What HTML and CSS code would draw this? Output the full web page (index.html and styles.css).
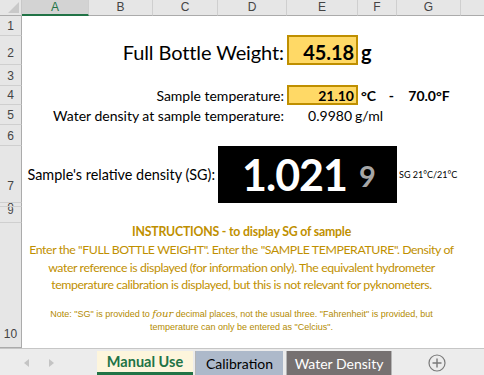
FILE: index.html
```html
<!DOCTYPE html>
<html lang="en">
<head>
    <meta charset="UTF-8">
    <title>Pycnometer SG</title>
    <link rel="stylesheet" href="styles.css">
</head>
<body>
    <div class="window">
        <div class="sheet">
            <div class="corner"><span class="tri"></span></div>
            <div class="colhead sel">A</div>
            <div class="colhead">B</div>
            <div class="colhead">C</div>
            <div class="colhead">D</div>
            <div class="colhead">E</div>
            <div class="colhead">F</div>
            <div class="colhead">G</div>
            <div class="colhead last"></div>

            <div class="rowhead r1">1</div>
            <div class="rowhead r2">2</div>
            <div class="rowhead r3">3</div>
            <div class="rowhead r4">4</div>
            <div class="rowhead r5">5</div>
            <div class="rowhead r6">6</div>
            <div class="rowhead r7">7</div>
            <div class="rowhead r8">8</div>
            <div class="rowhead r9">9</div>
            <div class="rowhead r10">10</div>

            <div class="label big weight-label">Full Bottle Weight:</div>
            <div class="input big weight-input">45.18</div>
            <div class="unit big weight-unit">g</div>

            <div class="label temp-label">Sample temperature:</div>
            <div class="input temp-input">21.10</div>
            <div class="temp-unit"><span>°C</span><span>-</span></div>
            <div class="temp-f">70.0°F</div>

            <div class="label dens-label">Water density at sample temperature:</div>
            <div class="dens-value">0.9980</div>
            <div class="dens-unit">g/ml</div>

            <div class="label sg-label">Sample's relative density (SG):</div>
            <div class="sg-box"><span class="sg-main">1.021</span><span class="sg-last">9</span></div>
            <div class="sg-note">SG 21°C/21°C</div>

            <div class="instructions">
                <div class="ins-title">INSTRUCTIONS - to display SG of sample</div>
                <p class="ins-text">Enter the "FULL BOTTLE WEIGHT". Enter the "SAMPLE TEMPERATURE". Density of<br>water reference is displayed (for information only). The equivalent hydrometer<br>temperature calibration is displayed, but this is not relevant for pyknometers.</p>
                <p class="ins-note">Note: "SG" is provided to <em>four</em> decimal places, not the usual three. "Fahrenheit" is provided, but<br>temperature can only be entered as "Celcius".</p>
            </div>
        </div>

        <div class="tabbar">
            <div class="nav"><span class="arrow left"></span><span class="arrow right"></span></div>
            <div class="tab active">Manual Use</div>
            <div class="tab calib">Calibration</div>
            <div class="tab water">Water Density</div>
            <div class="add">
                <svg width="18" height="18" viewBox="0 0 18 18">
                    <circle cx="9" cy="9" r="8" fill="none" stroke="#7a7a7a" stroke-width="1.2"/>
                    <path d="M9 4.5v9M4.5 9h9" stroke="#7a7a7a" stroke-width="1.4"/>
                </svg>
            </div>
        </div>
    </div>
</body>
</html>
```

FILE: styles.css
```css
body {
    margin: 0;
    background: #ffffff;
    font-family: Lato, "Open Sans", sans-serif;
}
.window {
    width: 484px;
    height: 375px;
    overflow: hidden;
}
.sheet {
    display: grid;
    grid-template-columns: 22px 67px 64px 65px 69px 71px 39px 64px 23px;
    grid-template-rows: 16px 20px 29px 21px 19px 20px 21px 57px 4px 16px 125px;
    height: 348px;
    color: #000;
}
.corner {
    grid-column: 1;
    grid-row: 1;
    background: #e6e6e6;
    border-right: 1px solid #c8c8c8;
    border-bottom: 1px solid #ababab;
    position: relative;
}
.tri {
    position: absolute;
    right: 2px;
    bottom: 2px;
    width: 0;
    height: 0;
    border-left: 11px solid transparent;
    border-bottom: 11px solid #c9c9c9;
}
.colhead {
    grid-row: 1;
    background: #e6e6e6;
    border-right: 1px solid #cfcfcf;
    border-bottom: 1px solid #ababab;
    font-family: "Liberation Sans", Arial, sans-serif;
    font-size: 12px;
    color: #444;
    text-align: center;
    line-height: 15px;
}
.colhead.sel {
    background: #d3d3d3;
    border-bottom: 2px solid #217346;
    color: #217346;
}
.colhead.last {
    border-right: none;
}
.rowhead {
    grid-column: 1;
    background: #e6e6e6;
    border-right: 1px solid #ababab;
    border-bottom: 1px solid #cfcfcf;
    font-family: "Liberation Sans", Arial, sans-serif;
    font-size: 12px;
    color: #444;
    display: flex;
    align-items: flex-end;
    justify-content: center;
    padding-bottom: 2px;
    box-sizing: border-box;
    overflow: hidden;
    line-height: 13px;
}
.r1 { grid-row: 2; }
.r2 { grid-row: 3; padding-bottom: 4px; }
.r3 { grid-row: 4; }
.r4 { grid-row: 5; }
.r5 { grid-row: 6; }
.r6 { grid-row: 7; }
.r7 { grid-row: 8; padding-bottom: 9px; }
.r8 { grid-row: 9; padding-bottom: 0; align-items: center; font-size: 11px; }
.r9 { grid-row: 10; padding-bottom: 0; align-items: flex-start; line-height: 7px; font-size: 11px; }
.r10 { grid-row: 11; border-bottom: 1px solid #ababab; padding-bottom: 6px; }

.label {
    text-align: right;
    padding-right: 3px;
    white-space: nowrap;
    display: flex;
    align-items: center;
    justify-content: flex-end;
    font-size: 14px;
}
.big {
    font-size: 20px;
    letter-spacing: -0.1px;
}
.weight-label { grid-column: 2 / 6; grid-row: 3; padding-top: 3px; }
.input {
    background: #ffd966;
    border: 2px solid #bf8f00;
    font-weight: bold;
    text-align: right;
    display: flex;
    align-items: center;
    justify-content: flex-end;
    padding-right: 2px;
    white-space: nowrap;
}
.weight-input { grid-column: 6; grid-row: 3; margin-top: -1px; padding-top: 3px; }
.weight-unit {
    grid-column: 7;
    grid-row: 3;
    font-weight: bold;
    display: flex;
    align-items: center;
    padding-left: 3px;
    padding-top: 3px;
}
.temp-label { grid-column: 2 / 6; grid-row: 5; }
.temp-input { grid-column: 6; grid-row: 5; font-size: 14px; margin-top: -1px; }
.temp-unit {
    grid-column: 7;
    grid-row: 5;
    display: flex;
    justify-content: space-between;
    align-items: center;
    font-size: 14px;
    font-weight: bold;
    padding: 0 3px 0 3px;
}
.temp-f {
    grid-column: 8;
    grid-row: 5;
    font-size: 14px;
    font-weight: bold;
    display: flex;
    align-items: center;
    justify-content: center;
}
.dens-label { grid-column: 2 / 6; grid-row: 6; }
.dens-value {
    grid-column: 6;
    grid-row: 6;
    font-size: 14px;
    text-align: right;
    display: flex;
    align-items: center;
    justify-content: flex-end;
    padding-right: 6px;
}
.dens-unit {
    grid-column: 7 / 9;
    grid-row: 6;
    font-size: 14px;
    display: flex;
    align-items: center;
    margin-left: -3px;
}
.sg-label { grid-column: 2 / 5; grid-row: 8; font-size: 14.4px; }
.sg-box {
    grid-column: 5 / 8;
    grid-row: 8;
    background: #000;
    display: flex;
    align-items: center;
    padding-left: 24px;
    font-weight: bold;
    white-space: nowrap;
}
.sg-main {
    color: #fff;
    font-size: 43px;
    letter-spacing: -1px;
}
.sg-last {
    color: #a6a6a6;
    font-size: 29px;
    margin-left: 12px;
    padding-top: 2px;
}
.sg-note {
    grid-column: 8 / 10;
    grid-row: 8;
    font-size: 9px;
    display: flex;
    align-items: center;
    padding-left: 2px;
    white-space: nowrap;
}
.instructions {
    grid-column: 2 / 9;
    grid-row: 11;
    text-align: center;
    color: #bf9000;
    font-size: 12.3px;
    letter-spacing: -0.4px;
}
.ins-title {
    font-weight: bold;
    line-height: 18px;
    letter-spacing: -0.2px;
}
.ins-text {
    margin: 0;
    line-height: 17.7px;
    white-space: nowrap;
}
.ins-note {
    margin: 13px 0 0 0;
    font-family: "Liberation Sans", Arial, sans-serif;
    font-size: 9px;
    letter-spacing: 0;
    line-height: 13px;
    color: #b38b00;
    white-space: nowrap;
}
.ins-note em {
    font-family: "DejaVu Serif", serif;
    font-size: 10px;
}

.tabbar {
    height: 27px;
    background: #ececec;
    border-top: 1px solid #c6c6c6;
    display: flex;
    align-items: stretch;
    box-sizing: border-box;
    padding-top: 2px;
}
.nav {
    width: 97px;
    display: flex;
    align-items: center;
    padding-left: 24px;
    gap: 20px;
    box-sizing: border-box;
}
.arrow {
    width: 0;
    height: 0;
    border-top: 4px solid transparent;
    border-bottom: 4px solid transparent;
}
.arrow.left { border-right: 5px solid #c4c4c4; }
.arrow.right { border-left: 5px solid #c4c4c4; }
.tab {
    display: flex;
    align-items: center;
    justify-content: center;
    font-size: 14px;
    margin-right: 3px;
    border-left: 1px solid #b5b5b5;
    box-sizing: border-box;
}
.tab.active {
    width: 96px;
    background: #fdf5dc;
    color: #217346;
    font-weight: bold;
    font-size: 14.5px;
    border-bottom: 3px solid #217346;
    border-left: none;
    margin-right: 2px;
}
.tab.calib {
    width: 88px;
    background: #adb9ca;
    color: #000;
}
.tab.water {
    width: 106px;
    background: #767171;
    color: #fff;
    border-right: 1px solid #b5b5b5;
}
.add {
    flex: 1;
    display: flex;
    align-items: center;
    justify-content: flex-end;
    padding-right: 38px;
}
```
